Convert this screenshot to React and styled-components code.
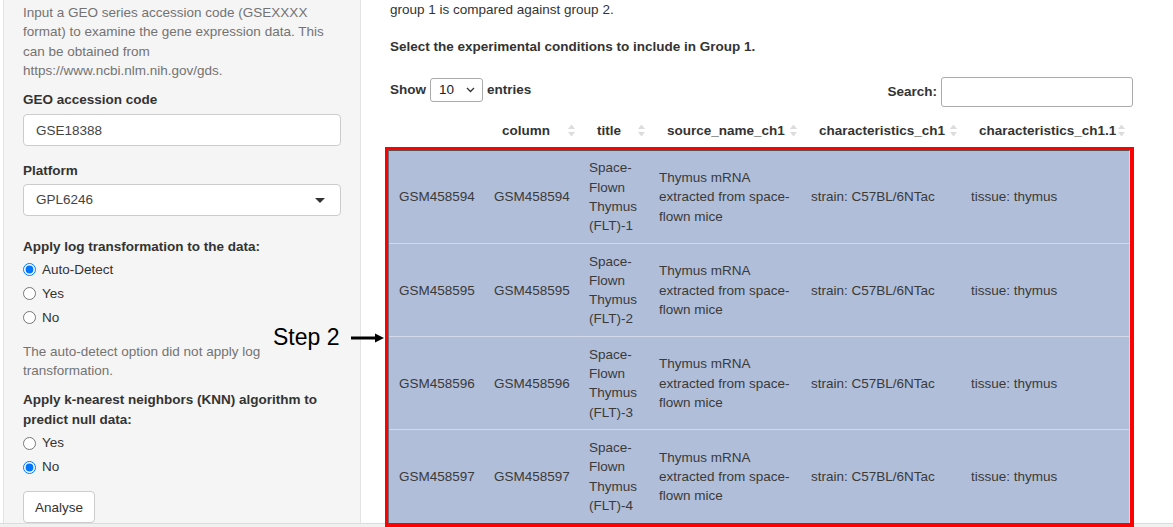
import React from 'react';
import styled, { createGlobalStyle } from 'styled-components';

const Global = createGlobalStyle`
  html, body { margin: 0; padding: 0; background: #fff; overflow: hidden; }
  body {
    font-family: "Liberation Sans", Arial, sans-serif;
    font-size: 13.5px;
    line-height: 19.3px;
    color: #333;
  }
  * { box-sizing: border-box; }
`;

const Page = styled.div`
  position: relative;
  width: 1173px;
  height: 527px;
  overflow: hidden;
  display: flex;
  flex-direction: column;
`;

const Body = styled.div`
  height: 523px;
  flex: none;
  display: flex;
  align-items: stretch;
`;

const Footer = styled.div`
  height: 4px;
  flex: none;
  border-top: 1px solid #dcdcdc;
  background: #f1f1f1;
`;

/* ---------- Sidebar ---------- */
const Sidebar = styled.aside`
  margin-left: 3px;
  width: 358px;
  flex: none;
  background: #f5f5f5;
  border: 1px solid #e3e3e3;
  border-top: none;
  border-bottom: none;
  padding: 3px 19px 0 19px;
  display: flex;
  flex-direction: column;
`;

const Help = styled.p`
  margin: ${p => p.$mt || 0}px 0 0 0;
  color: #737373;
`;

const Label = styled.label`
  display: block;
  font-weight: bold;
  margin-top: ${p => p.$mt || 0}px;
  margin-bottom: ${p => p.$mb || 0}px;
`;

const TextInput = styled.div`
  height: 32px;
  border: 1px solid #ccc;
  border-radius: 4px;
  background: #fff;
  padding: 0 12px;
  display: flex;
  align-items: center;
  color: #444;
`;

const SelectBox = styled(TextInput)`
  justify-content: space-between;
  padding-right: 15px;
`;

const Caret = styled.span`
  width: 0;
  height: 0;
  border-style: solid;
  border-width: 5px 5px 0 5px;
  border-color: #333 transparent transparent transparent;
`;

const RadioList = styled.div`
  margin-top: 2px;
  display: flex;
  flex-direction: column;
`;

const RadioRow = styled.label`
  height: 24px;
  display: flex;
  align-items: center;
  cursor: pointer;
  input {
    margin: 0 6px 0 0;
    width: 13px;
    height: 13px;
  }
`;

const Button = styled.button`
  margin-top: 12px;
  align-self: flex-start;
  width: 72px;
  height: 32px;
  border: 1px solid #ccc;
  border-radius: 4px;
  background: #fff;
  color: #333;
  font-family: inherit;
  font-size: 13.5px;
  padding: 0;
`;

/* ---------- Main ---------- */
const Main = styled.main`
  flex: 1;
  padding: 0 40px 0 28px;
  display: flex;
  flex-direction: column;
`;

const Para = styled.p`
  margin: ${p => p.$mt || 0}px 0 0 1px;
  font-weight: ${p => (p.$bold ? 'bold' : 'normal')};
`;

const Controls = styled.div`
  margin-top: 20px;
  height: 30px;
  display: flex;
  justify-content: space-between;
  font-weight: bold;
`;

const LengthGroup = styled.div`
  margin: 1px 0 0 1px;
  height: 24px;
  display: flex;
  align-items: center;
  gap: 4px;
`;

const SmallSelect = styled.div`
  width: 53px;
  height: 24px;
  border: 1px solid #aaa;
  border-radius: 3px;
  padding: 0 7px 0 8px;
  display: flex;
  align-items: center;
  justify-content: space-between;
  font-weight: normal;
  color: #222;
`;

const SearchGroup = styled.div`
  display: flex;
  align-items: center;
  gap: 4px;
  margin-right: 1px;
`;

const SearchInput = styled.div`
  width: 192px;
  height: 30px;
  border: 1px solid #aaa;
  border-radius: 3px;
  background: #fff;
`;

const HeadTable = styled.table`
  margin-top: 6px;
  width: 740px;
  table-layout: fixed;
  border-collapse: collapse;
`;

const Th = styled.th`
  padding: 8px 4px 7px 18px;
  text-align: left;
  font-weight: bold;
  white-space: nowrap;
`;

const ThInner = styled.div`
  display: flex;
  align-items: center;
  justify-content: space-between;
`;

const Frame = styled.div`
  position: relative;
  z-index: 1;
  margin-left: -4px;
  width: 749px;
  border-style: solid;
  border-color: #ff0000;
  border-width: 3px 4px 4px 3px;
  flex: none;
`;

const Inner = styled.div`
  border-top: 1px solid #555;
  border-left: 1px solid #6b7180;
  border-right: 1px solid #d3d9e8;
  background: #b0bed9;
`;

const BodyTable = styled.table`
  width: 740px;
  table-layout: fixed;
  border-collapse: collapse;
`;

const Tr = styled.tr`
  & + & td { border-top: 1px solid #d3d9e9; }
`;

const Td = styled.td`
  padding: 7.5px 10px;
  vertical-align: middle;
  color: #3a3a3a;
`;

const Annotation = styled.div`
  position: absolute;
  left: 273px;
  top: 324px;
  display: flex;
  align-items: center;
  gap: 11px;
  font-family: "Liberation Sans", Arial, sans-serif;
  font-size: 23px;
  line-height: 27px;
  color: #000;
`;

const widths = [95, 95, 70, 152, 160, 168];

const Cols = () => (
  <colgroup>
    {widths.map((w, i) => (
      <col key={i} style={{ width: w }} />
    ))}
  </colgroup>
);

const SortIcon = () => (
  <svg width="7" height="13" viewBox="0 0 7 13">
    <polygon points="3.5,0.5 7,5 0,5" fill="#dcdcdc" />
    <polygon points="0,8 7,8 3.5,12.5" fill="#dcdcdc" />
  </svg>
);

const Chevron = () => (
  <svg width="9" height="6" viewBox="0 0 9 6">
    <polyline points="1,1 4.5,4.5 8,1" fill="none" stroke="#333" strokeWidth="1.3" />
  </svg>
);

const Arrow = () => (
  <svg width="34" height="12" viewBox="0 0 34 12">
    <line x1="0" y1="6" x2="26" y2="6" stroke="#000" strokeWidth="3" />
    <polygon points="24,1.5 33,6 24,10.5" fill="#000" />
  </svg>
);

const headers = ['', 'column', 'title', 'source_name_ch1', 'characteristics_ch1', 'characteristics_ch1.1'];

const rows = [1, 2, 3, 4].map(n => ({
  id: `GSM45859${3 + n}`,
  title: `Space-Flown Thymus (FLT)-${n}`,
}));

export default function App() {
  return (
    <>
      <Global />
      <Page>
        <Body>
          <Sidebar>
            <Help>
              Input a GEO series accession code (GSEXXXX format) to examine the gene expression data. This can be
              obtained from https://www.ncbi.nlm.nih.gov/gds.
            </Help>
            <Label $mt={10} $mb={5}>GEO accession code</Label>
            <TextInput>GSE18388</TextInput>
            <Label $mt={14.5} $mb={4}>Platform</Label>
            <SelectBox>
              <span>GPL6246</span>
              <Caret />
            </SelectBox>
            <Label $mt={20.5}>Apply log transformation to the data:</Label>
            <RadioList>
              <RadioRow><input type="radio" name="log" defaultChecked />Auto-Detect</RadioRow>
              <RadioRow><input type="radio" name="log" />Yes</RadioRow>
              <RadioRow><input type="radio" name="log" />No</RadioRow>
            </RadioList>
            <Help $mt={12}>The auto-detect option did not apply log transformation.</Help>
            <Label $mt={10}>Apply k-nearest neighbors (KNN) algorithm to predict null data:</Label>
            <RadioList>
              <RadioRow><input type="radio" name="knn" />Yes</RadioRow>
              <RadioRow><input type="radio" name="knn" defaultChecked />No</RadioRow>
            </RadioList>
            <Button>Analyse</Button>
          </Sidebar>
          <Main>
            <Para>group 1 is compared against group 2.</Para>
            <Para $mt={18} $bold>Select the experimental conditions to include in Group 1.</Para>
            <Controls>
              <LengthGroup>
                <span>Show</span>
                <SmallSelect>
                  <span>10</span>
                  <Chevron />
                </SmallSelect>
                <span>entries</span>
              </LengthGroup>
              <SearchGroup>
                <span>Search:</span>
                <SearchInput />
              </SearchGroup>
            </Controls>
            <HeadTable>
              <Cols />
              <thead>
                <tr>
                  {headers.map((h, i) => (
                    <Th key={i}>
                      <ThInner>
                        <span>{h}</span>
                        {i > 0 && <SortIcon />}
                      </ThInner>
                    </Th>
                  ))}
                </tr>
              </thead>
            </HeadTable>
            <Frame>
              <Inner>
                <BodyTable>
                  <Cols />
                  <tbody>
                    {rows.map(r => (
                      <Tr key={r.id}>
                        <Td>{r.id}</Td>
                        <Td>{r.id}</Td>
                        <Td>{r.title}</Td>
                        <Td>Thymus mRNA extracted from space-flown mice</Td>
                        <Td>strain: C57BL/6NTac</Td>
                        <Td>tissue: thymus</Td>
                      </Tr>
                    ))}
                  </tbody>
                </BodyTable>
              </Inner>
            </Frame>
          </Main>
        </Body>
        <Footer />
        <Annotation>
          <span>Step 2</span>
          <Arrow />
        </Annotation>
      </Page>
    </>
  );
}
